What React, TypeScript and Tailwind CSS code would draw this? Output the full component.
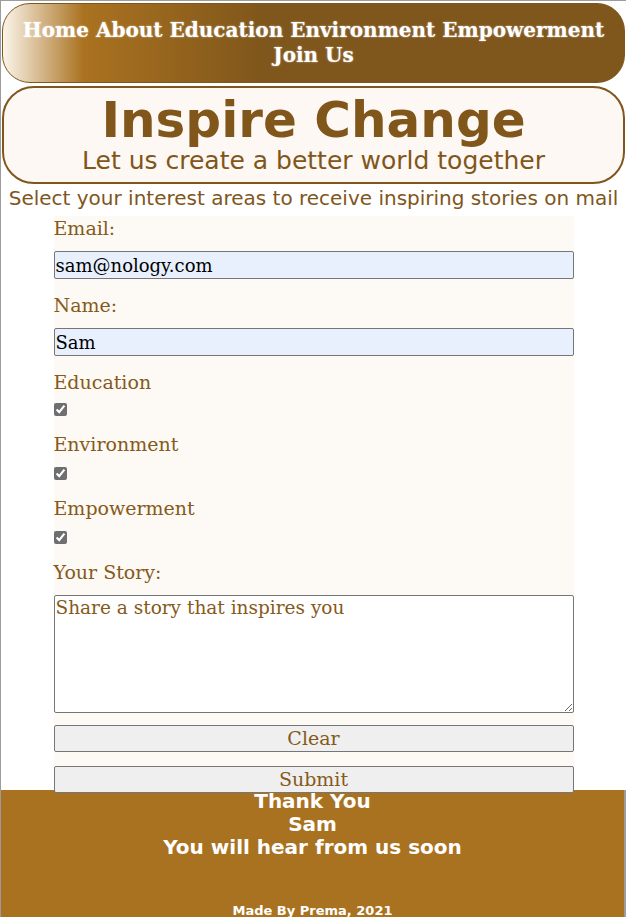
import React from "react";

const slab = "font-['DejaVu_Serif',serif]";
const sans = "font-['DejaVu_Sans',Verdana,sans-serif]";
const labelCls = "block h-[24px] leading-[24px] text-[19px] text-[#855a1a]";

function Field({ label, value, className }: { label: string; value: string; className?: string }) {
  return (
    <>
      <label className={`${labelCls} ${className ?? ""}`}>{label}</label>
      <input
        type="text"
        defaultValue={value}
        className="mt-[11px] block h-[28px] w-full shrink-0 rounded-[2px] border border-[#767676] bg-[#e8f0fe] px-[1px] text-[18px] text-black outline-none"
      />
    </>
  );
}

function Interest({ label, first }: { label: string; first?: boolean }) {
  return (
    <>
      <label className={`${labelCls} ${first ? "mt-[14px]" : "mt-[16px]"}`}>{label}</label>
      <input
        type="checkbox"
        defaultChecked
        className={`${first ? "mt-[9px]" : "mt-[11px]"} mb-0 ml-0 block h-[13px] w-[13px] shrink-0 accent-[#6f6f6f]`}
      />
    </>
  );
}

export default function App() {
  return (
    <div className="min-h-[917px] border-l border-t border-[#9c9c9c] bg-white">
      {/* Nav */}
      <nav className="mx-px mt-[2px] flex h-[80px] flex-wrap content-center justify-center rounded-[28px] border border-[#7f561b] bg-[linear-gradient(to_right,#fbf4ea_0%,#aa7220_13%,#7f561b_42%,#7f561b_100%)] px-4">
        <div className={`${slab} text-center text-[20px] font-bold leading-[25px] text-white [text-shadow:0_0_2px_rgba(255,255,255,0.6)]`}>
          <div className="flex justify-center gap-[7px]">
            <a>Home</a>
            <a>About</a>
            <a>Education</a>
            <a>Environment</a>
            <a>Empowerment</a>
          </div>
          <div>
            <a>Join Us</a>
          </div>
        </div>
      </nav>

      {/* Hero */}
      <header className={`${sans} mx-px mt-[3px] flex h-[98px] flex-col items-center justify-center rounded-[32px] border-2 border-[#7f561b] bg-[#fdf8f3] text-[#80561a]`}>
        <h1 className="-mt-[3px] text-[50px] font-bold leading-[54px]">Inspire Change</h1>
        <p className="text-[25px] leading-[28px]">Let us create a better world together</p>
      </header>

      <p className={`${sans} mt-[1px] text-center text-[20px] leading-[26px] text-[#7f561b]`}>
        Select your interest areas to receive inspiring stories on mail
      </p>

      {/* Form */}
      <form className={`${slab} relative z-10 mx-auto mt-[5px] flex h-[574px] w-[520px] flex-col bg-[#fdf9f5]`}>
        <Field label="Email:" value="sam@nology.com" />
        <Field label="Name:" value="Sam" className="mt-[14px]" />
        <Interest label="Education" first />
        <Interest label="Environment" />
        <Interest label="Empowerment" />
        <label className={`${labelCls} mt-[16px]`}>Your Story:</label>
        <textarea
          placeholder="Share a story that inspires you"
          className="mt-[11px] block h-[118px] w-full shrink-0 resize-y rounded-[2px] border border-[#767676] bg-white px-[1px] text-[18.5px] leading-[24px] text-[#855a1a] outline-none placeholder:text-[#855a1a]"
        />
        <button type="button" className="mt-[12px] block h-[27px] w-full shrink-0 rounded-[2px] border border-[#767676] bg-[#efefef] text-[19px] leading-[25px] text-[#855a1a]">
          Clear
        </button>
        <button type="button" className="mt-[14px] block h-[27px] w-full shrink-0 rounded-[2px] border border-[#767676] bg-[#efefef] text-[19px] leading-[25px] text-[#855a1a]">
          Submit
        </button>
      </form>

      {/* Footer */}
      <footer className={`${sans} flex h-[127px] flex-col items-center border-r-2 border-[#9c9c9c] bg-[#a97220] text-center font-bold text-white`}>
        <p className="text-[20px] leading-[23px]">Thank You</p>
        <p className="text-[20px] leading-[23px]">Sam</p>
        <p className="text-[20px] leading-[23px]">You will hear from us soon</p>
        <p className="mt-auto mb-[-1px] text-[13px] leading-[14px]">Made By Prema, 2021</p>
      </footer>
    </div>
  );
}
